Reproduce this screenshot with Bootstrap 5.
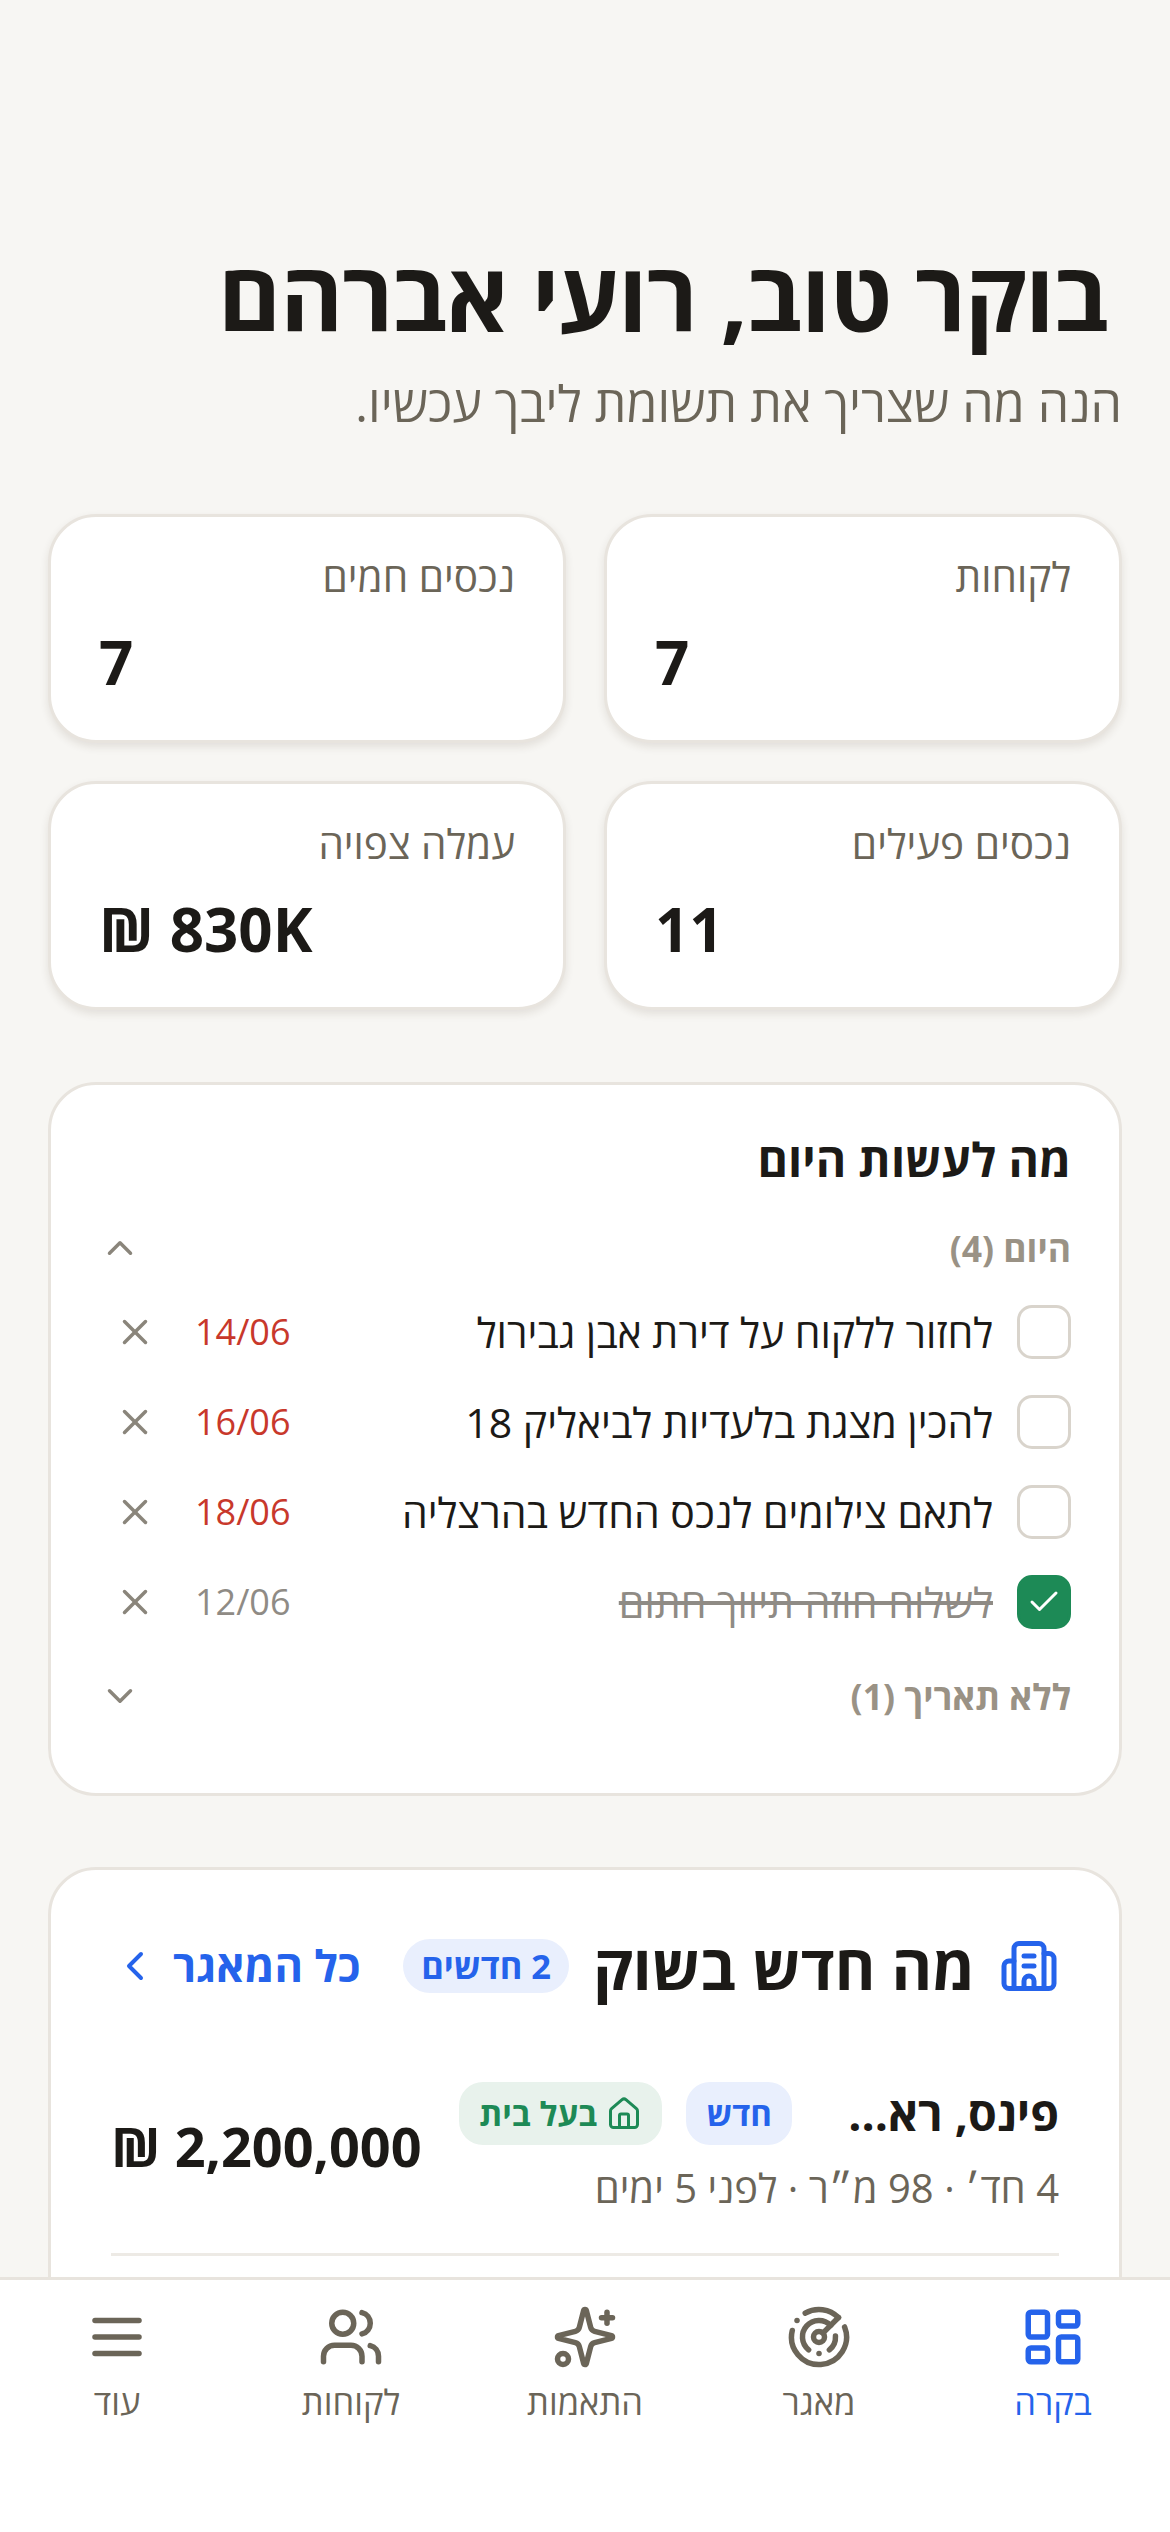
<!DOCTYPE html>
<html lang="he" dir="rtl">

<head>
    <meta charset="UTF-8">
    <meta name="viewport" content="width=device-width, initial-scale=1.0">
    <title>בוקר טוב</title>

    <link href="https://cdn.jsdelivr.net/npm/bootstrap@5.3.0/dist/css/bootstrap.min.css" rel="stylesheet">
    <style>
        html, body { height: 2532px; overflow: hidden; }
        body { background: #F7F6F3; color: #1C1A17; font-family: "Open Sans", "Noto Sans", sans-serif; }
        svg { display: block; fill: none; stroke: currentColor; stroke-width: 2; stroke-linecap: round; stroke-linejoin: round; flex-shrink: 0; }

        .page-wrap { padding: 250px 48px 0; }
        .page-title { font-size: 96px; line-height: 90px; font-weight: 700; letter-spacing: -.96px; margin: 0 14px 33px 0; }
        .page-sub { font-size: 50px; line-height: 60px; color: #6B6558; margin: 0 0 81px; }

        .stat-row { --bs-gutter-x: 38px; --bs-gutter-y: 38px; margin-bottom: 72px; }
        .panel { background: #fff; border: 3px solid #E8E4DE; border-radius: 48px; }
        .stat-box { height: 229px; padding: 33px 48px; box-shadow: 0 4px 9px rgba(60, 50, 30, .11); }
        .stat-label { font-size: 40.5px; line-height: 54px; color: #6B6558; }
        .stat-value { font-size: 60px; line-height: 80px; font-weight: 700; margin-top: 18px; text-align: left; }

        .todo-box { padding: 44px 48px 73px; margin-bottom: 71px; }
        .todo-title { font-size: 46.5px; line-height: 60px; font-weight: 700; margin: 0 0 35px; }
        .todo-group { font-size: 35.5px; line-height: 48px; font-weight: 700; color: #9A9285; }
        .group-arrow { width: 42px; height: 42px; color: #8A857B; }
        .todo-list { display: flex; flex-direction: column; gap: 36px; margin: 33px 0 43px; }
        .todo-row { height: 54px; gap: 24px; }
        .tick { width: 54px; height: 54px; border: 3px solid #D9D4CC; border-radius: 15px; flex-shrink: 0; }
        .tick.done { background: #1D8A56; border-color: #1D8A56; color: #fff; }
        .todo-text { font-size: 41px; line-height: 54px; flex-grow: 1; }
        .todo-text.done { color: #8F8B85; text-decoration: line-through; }
        .todo-date { font-size: 36px; line-height: 54px; color: #C8382B; }
        .todo-date.done { color: #8F8B85; }
        .todo-x { width: 72px; height: 54px; color: #8A857B; }

        .market-box { padding: 66px 60px 300px; }
        .market-icon { color: #2563EB; width: 60px; height: 60px; }
        .market-title { font-size: 62px; line-height: 60px; font-weight: 700; margin: 0; }
        .count-pill { font-size: 34.5px; line-height: 54px; height: 54px; font-weight: 700; padding: 0 18px; border-radius: 27px; background: #E9EFFD; color: #2563EB; }
        .all-link { font-size: 43.5px; line-height: 60px; font-weight: 700; color: #2563EB; text-decoration: none; gap: 14px; }
        .market-item { margin-top: 86px; padding-bottom: 38px; border-bottom: 3px solid #EDEAE5; }
        .item-name { font-size: 46.5px; line-height: 63px; font-weight: 700; width: 267px; }
        .tag-pill { font-size: 33px; line-height: 63px; height: 63px; font-weight: 700; padding: 0 20px; border-radius: 24px; gap: 9px; }
        .tag-new { background: #E9EFFD; color: #2563EB; }
        .tag-owner { background: #E8F2EC; color: #1D8A56; }
        .item-sub { font-size: 40px; line-height: 54px; color: #6B6558; margin-top: 16px; }
        .item-price { font-size: 54px; line-height: 70px; font-weight: 700; margin-bottom: 6px; }

        .tab-bar { height: 255px; background: #fff; border-top: 3px solid #E8E4DE; }
        .tab-item { width: 234px; padding-top: 24px; color: #6B6558; text-decoration: none; font-size: 34.5px; line-height: 42px; gap: 11px; }
        .tab-item.active { color: #2563EB; }
    </style>
</head>

<body>
    <main class="page-wrap">
        <h1 class="page-title">בוקר טוב, רועי אברהם</h1>
        <p class="page-sub">הנה מה שצריך את תשומת ליבך עכשיו.</p>

        <div class="row stat-row">
            <div class="col-6"><div class="panel stat-box"><div class="stat-label">לקוחות</div><div class="stat-value" dir="ltr">7</div></div></div>
            <div class="col-6"><div class="panel stat-box"><div class="stat-label">נכסים חמים</div><div class="stat-value" dir="ltr">7</div></div></div>
            <div class="col-6"><div class="panel stat-box"><div class="stat-label">נכסים פעילים</div><div class="stat-value" dir="ltr">11</div></div></div>
            <div class="col-6"><div class="panel stat-box"><div class="stat-label">עמלה צפויה</div><div class="stat-value" dir="ltr">₪ 830K</div></div></div>
        </div>

        <section class="panel todo-box">
            <h2 class="todo-title">מה לעשות היום</h2>
            <div class="d-flex justify-content-between align-items-center todo-group">
                <span>היום (4)</span>
                <svg class="group-arrow" viewBox="0 0 24 24"><path d="m18 15-6-6-6 6"/></svg>
            </div>
            <div class="todo-list">
                <div class="d-flex align-items-center todo-row">
                    <span class="tick"></span>
                    <span class="todo-text">לחזור ללקוח על דירת אבן גבירול</span>
                    <span class="todo-date" dir="ltr">14/06</span>
                    <span class="todo-x d-flex justify-content-center align-items-center"><svg width="42" height="42" viewBox="0 0 24 24"><path d="M18 6 6 18"/><path d="m6 6 12 12"/></svg></span>
                </div>
                <div class="d-flex align-items-center todo-row">
                    <span class="tick"></span>
                    <span class="todo-text">להכין מצגת בלעדיות לביאליק 18</span>
                    <span class="todo-date" dir="ltr">16/06</span>
                    <span class="todo-x d-flex justify-content-center align-items-center"><svg width="42" height="42" viewBox="0 0 24 24"><path d="M18 6 6 18"/><path d="m6 6 12 12"/></svg></span>
                </div>
                <div class="d-flex align-items-center todo-row">
                    <span class="tick"></span>
                    <span class="todo-text">לתאם צילומים לנכס החדש בהרצליה</span>
                    <span class="todo-date" dir="ltr">18/06</span>
                    <span class="todo-x d-flex justify-content-center align-items-center"><svg width="42" height="42" viewBox="0 0 24 24"><path d="M18 6 6 18"/><path d="m6 6 12 12"/></svg></span>
                </div>
                <div class="d-flex align-items-center todo-row">
                    <span class="tick done d-flex justify-content-center align-items-center"><svg width="36" height="36" viewBox="0 0 24 24" stroke-width="2.5"><path d="M20 6 9 17l-5-5"/></svg></span>
                    <span class="todo-text done">לשלוח חוזה תיווך חתום</span>
                    <span class="todo-date done" dir="ltr">12/06</span>
                    <span class="todo-x d-flex justify-content-center align-items-center"><svg width="42" height="42" viewBox="0 0 24 24"><path d="M18 6 6 18"/><path d="m6 6 12 12"/></svg></span>
                </div>
            </div>
            <div class="d-flex justify-content-between align-items-center todo-group">
                <span>ללא תאריך (1)</span>
                <svg class="group-arrow" viewBox="0 0 24 24"><path d="m6 9 6 6 6-6"/></svg>
            </div>
        </section>

        <section class="panel market-box">
            <div class="d-flex justify-content-between align-items-center">
                <div class="d-flex align-items-center gap-4">
                    <svg class="market-icon" viewBox="0 0 24 24"><path d="M10 12h4"/><path d="M10 8h4"/><path d="M14 21v-3a2 2 0 0 0-4 0v3"/><path d="M6 10H4a2 2 0 0 0-2 2v7a2 2 0 0 0 2 2h16a2 2 0 0 0 2-2V9a2 2 0 0 0-2-2h-2"/><path d="M6 21V5a2 2 0 0 1 2-2h8a2 2 0 0 1 2 2v16"/></svg>
                    <h2 class="market-title">מה חדש בשוק</h2>
                    <span class="count-pill">2 חדשים</span>
                </div>
                <a href="#" class="all-link d-flex align-items-center">כל המאגר <svg width="48" height="48" viewBox="0 0 24 24"><path d="m15 18-6-6 6-6"/></svg></a>
            </div>

            <div class="market-item d-flex justify-content-between align-items-center">
                <div>
                    <div class="d-flex align-items-center">
                        <span class="item-name">פינס, רא...</span>
                        <span class="tag-pill tag-new">חדש</span>
                        <span class="tag-pill tag-owner d-flex align-items-center ms-4 me-4">
                            <svg width="36" height="36" viewBox="0 0 24 24"><path d="M15 21v-8a1 1 0 0 0-1-1h-4a1 1 0 0 0-1 1v8"/><path d="M3 10a2 2 0 0 1 .709-1.528l7-5.999a2 2 0 0 1 2.582 0l7 5.999A2 2 0 0 1 21 10v9a2 2 0 0 1-2 2H5a2 2 0 0 1-2-2z"/></svg>
                            בעל בית
                        </span>
                    </div>
                    <div class="item-sub">4 חד׳ · 98 מ״ר · לפני 5 ימים</div>
                </div>
                <div class="item-price" dir="ltr">₪ 2,200,000</div>
            </div>
        </section>
    </main>

    <nav class="tab-bar fixed-bottom d-flex">
        <a href="#" class="tab-item active d-flex flex-column align-items-center">
            <svg width="66" height="66" viewBox="0 0 24 24" stroke-width="1.8"><rect x="3" y="3" width="7" height="9" rx="1"/><rect x="14" y="3" width="7" height="5" rx="1"/><rect x="14" y="12" width="7" height="9" rx="1"/><rect x="3" y="16" width="7" height="5" rx="1"/></svg>
            בקרה
        </a>
        <a href="#" class="tab-item d-flex flex-column align-items-center">
            <svg width="66" height="66" viewBox="0 0 24 24" stroke-width="1.8"><path d="M19.07 4.93A10 10 0 0 0 6.99 3.34"/><path d="M4 6h.01"/><path d="M2.29 9.62A10 10 0 1 0 21.31 8.35"/><path d="M16.24 7.76A6 6 0 1 0 8.23 16.67"/><path d="M12 18h.01"/><path d="M17.99 11.66A6 6 0 0 1 15.77 16.67"/><circle cx="12" cy="12" r="2"/><path d="m13.41 10.59 5.66-5.66"/></svg>
            מאגר
        </a>
        <a href="#" class="tab-item d-flex flex-column align-items-center">
            <svg width="66" height="66" viewBox="0 0 24 24" stroke-width="1.8"><path d="M9.937 15.5A2 2 0 0 0 8.5 14.063l-6.135-1.582a.5.5 0 0 1 0-.962L8.5 9.936A2 2 0 0 0 9.937 8.5l1.582-6.135a.5.5 0 0 1 .963 0L14.063 8.5A2 2 0 0 0 15.5 9.937l6.135 1.581a.5.5 0 0 1 0 .964L15.5 14.063a2 2 0 0 0-1.437 1.437l-1.582 6.135a.5.5 0 0 1-.963 0z"/><path d="M20 3v4"/><path d="M22 5h-4"/><circle cx="4" cy="20" r="2"/></svg>
            התאמות
        </a>
        <a href="#" class="tab-item d-flex flex-column align-items-center">
            <svg width="66" height="66" viewBox="0 0 24 24" stroke-width="1.8"><path d="M16 21v-2a4 4 0 0 0-4-4H6a4 4 0 0 0-4 4v2"/><circle cx="9" cy="7" r="4"/><path d="M22 21v-2a4 4 0 0 0-3-3.87"/><path d="M16 3.13a4 4 0 0 1 0 7.75"/></svg>
            לקוחות
        </a>
        <a href="#" class="tab-item d-flex flex-column align-items-center">
            <svg width="66" height="66" viewBox="0 0 24 24" stroke-width="1.8"><path d="M4 6h16"/><path d="M4 12h16"/><path d="M4 18h16"/></svg>
            עוד
        </a>
    </nav>

    <script src="https://cdn.jsdelivr.net/npm/bootstrap@5.3.0/dist/js/bootstrap.bundle.min.js"></script>
</body>

</html>
